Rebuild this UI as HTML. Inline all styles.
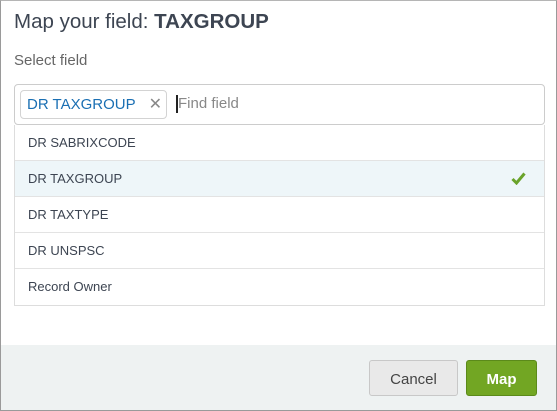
<!DOCTYPE html>
<html><head><style>
*{box-sizing:border-box;margin:0;padding:0}
body{width:557px;height:411px;font-family:"Liberation Sans",sans-serif;background:#fff;position:relative;overflow:hidden}
.frame{position:absolute;left:0;top:0;width:557px;height:411px;border:1px solid #9a9a9a;border-top-color:#b5b5b5}
h1{position:absolute;left:14px;top:10px;font-size:20.5px;font-weight:normal;color:#3d4552}
h1 b{font-weight:bold}
.lbl{position:absolute;left:14px;top:52px;font-size:15px;color:#666}
.inp{position:absolute;left:14px;top:84px;width:531px;height:41px;border:1px solid #ccc;border-radius:4px}
.tag{position:absolute;left:5px;top:5px;width:147px;height:29px;border:1px solid #d3d3d3;border-radius:4px;color:#1a6fb3;font-size:15px;line-height:27px;padding-left:6px}
.tag span{position:absolute;right:4px;top:0;color:#888;font-size:16px;font-weight:100}
.cur{position:absolute;left:161px;top:10px;width:2px;height:18px;background:#222}
.ph{position:absolute;left:163px;top:10px;font-size:15px;color:#888}
.list{position:absolute;left:14px;top:125px;width:531px;border:1px solid #ddd;border-top:none}
.row{height:36px;border-bottom:1px solid #e3e3e3;font-size:13px;color:#3d4552;line-height:35px;padding-left:13px;position:relative}
.row:last-child{border-bottom:none}
.sel{background:#eef6f9}
.foot{position:absolute;left:1px;top:345px;width:555px;height:65px;background:#eef2f2}
.btn{position:absolute;top:360px;height:36px;border-radius:3px;font-size:15px;text-align:center;line-height:37px}
.c{left:369px;width:89px;background:#e9e9e9;border:1px solid #c8c8c8;color:#444}
.m{left:466px;width:71px;background:#72a623;border:1px solid #5b8a1a;color:#fff;font-weight:bold}
</style></head><body>
<div class="frame"></div>
<h1>Map your field: <b>TAXGROUP</b></h1>
<div class="lbl">Select field</div>
<div class="inp"><div class="tag">DR TAXGROUP<span>✕</span></div><div class="cur"></div><div class="ph">Find field</div></div>
<div class="list">
<div class="row">DR SABRIXCODE</div>
<div class="row sel">DR TAXGROUP<svg style="position:absolute;right:18px;top:11px" width="15" height="13" viewBox="0 0 15 13"><path d="M1.5 7l4 4L13.5 1.5" stroke="#6aa32a" stroke-width="3" fill="none"/></svg></div>
<div class="row">DR TAXTYPE</div>
<div class="row">DR UNSPSC</div>
<div class="row">Record Owner</div>
</div>
<div class="foot"></div>
<div class="btn c">Cancel</div>
<div class="btn m">Map</div>
</body></html>
